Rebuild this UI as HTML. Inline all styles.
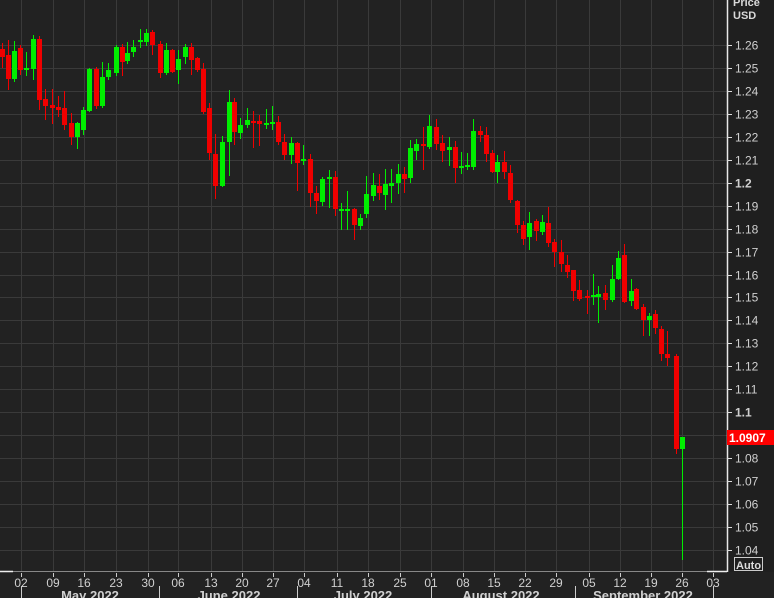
<!DOCTYPE html>
<html><head><meta charset="utf-8"><style>
html,body{margin:0;padding:0;background:#222;width:774px;height:598px;overflow:hidden}
svg{display:block}
text{font-family:"Liberation Sans","DejaVu Sans",sans-serif}
</style></head><body>
<svg id="s" width="774" height="598" xmlns="http://www.w3.org/2000/svg">
<rect width="774" height="598" fill="#222"/>
<g id="grid" stroke="#3a3a3a" stroke-width="1"></g>
<g id="c"></g>
<rect x="727" y="0" width="47" height="572" fill="#1f1f1f"/>
<line x1="727.5" y1="0" x2="727.5" y2="572" stroke="#e8e8e8" stroke-width="1.5"/>
<line x1="0" y1="571.5" x2="727" y2="571.5" stroke="#888" stroke-width="1"/>
<line x1="0" y1="571.5" x2="13" y2="571.5" stroke="#eee" stroke-width="1.5"/>
<line x1="707" y1="571.5" x2="727" y2="571.5" stroke="#eee" stroke-width="1.5"/>
<g id="ax" fill="#d0d0d0" font-size="12"></g>
<text x="733" y="6" fill="#d8d8d8" font-size="11" font-weight="bold">Price</text>
<text x="733" y="19" fill="#d8d8d8" font-size="11" font-weight="bold">USD</text>
<rect x="727" y="430" width="47" height="15" fill="#f00"/>
<text x="729" y="442" fill="#fff" font-size="12" font-weight="bold">1.0907</text>
<rect x="734.5" y="557.5" width="28" height="13" fill="#1f1f1f" stroke="#ccc"/>
<text x="736" y="569" fill="#ddd" font-size="11" font-weight="bold">Auto</text>
</svg>
<script>
var NS="http://www.w3.org/2000/svg";
function el(p,t,a,txt){var e=document.createElementNS(NS,t);for(var k in a)e.setAttribute(k,a[k]);if(txt)e.textContent=txt;p.appendChild(e);return e;}
var grid=document.getElementById('grid'),ax=document.getElementById('ax'),c=document.getElementById('c');
var dx=[21,53,84,116,148,178,211,242,273,304,337,368,400,431,463,494,525,556,589,620,651,682,713];
var dl=["02","09","16","23","30","06","13","20","27","04","11","18","25","01","08","15","22","29","05","12","19","26","03"];
dx.forEach(function(x,i){el(grid,'line',{x1:x+.5,y1:0,x2:x+.5,y2:571});
 el(ax,'line',{x1:x+.5,y1:573,x2:x+.5,y2:577,stroke:'#ccc'});
 el(ax,'text',{x:x,y:587,'text-anchor':'middle'},dl[i]);});
for(var k=0;k<=22;k++){var y=Math.round(45+k*22.95)+.5;var p=(1.26-k*0.01);
 el(grid,'line',{x1:0,y1:y,x2:727,y2:y});
 el(ax,'line',{x1:727,y1:y,x2:732,y2:y,stroke:'#ddd'});
 var s=p.toFixed(2),b=false;if(Math.abs(p-1.2)<1e-6){s="1.2";b=true}if(Math.abs(p-1.1)<1e-6){s="1.1";b=true}
 var t=el(ax,'text',{x:735,y:y+4},s);if(b)t.setAttribute('font-weight','bold');}
[21,159,297,431,575,713].forEach(function(x){el(ax,'line',{x1:x+.5,y1:586,x2:x+.5,y2:598,stroke:'#ccc'})});
[["May 2022",90],["June 2022",229],["July 2022",363],["August 2022",501],["September 2022",643]].forEach(function(m){
 el(ax,'text',{x:m[1],y:600,'text-anchor':'middle','font-weight':'bold','font-size':'13'},m[0]);});
var d=[
[2,'r',49,57,43,68],[8,'r',55,79,40,90],[14,'g',51,79,41,82],[20,'r',48,70,45,75],[26,'g',68,70,52,76],[33,'g',39,69,35,80],[39,'r',39,100,36,110],[45,'r',99,106,89,120],[52,'r',105,108,89,124],[58,'r',107,110,96,117],[64,'r',108,125,91,130],[71,'r',123,137,113,145],[77,'g',123,137,122,149],[83,'g',110,130,107,135],[89,'g',69,111,68,112],[96,'r',69,106,67,109],[102,'g',77,106,62,108],[108,'g',70,77,63,80],[116,'g',47,73,45,76],[122,'r',47,62,44,76],[127,'g',53,61,42,64],[133,'g',47,52,40,57],[140,'g',40,42,29,48],[146,'g',33,42,29,46],[152,'r',32,45,30,55],[160,'r',44,73,41,78],[166,'g',50,73,43,75],[172,'r',50,72,49,73],[178,'g',59,70,50,84],[185,'g',47,57,44,64],[191,'r',47,60,43,75],[197,'r',58,70,57,72],[203,'r',69,112,63,114],[209,'r',108,153,103,160],[215,'r',154,186,134,199],[222,'g',142,186,136,187],[229,'g',102,142,90,176],[234,'r',102,132,98,145],[240,'g',125,133,118,139],[247,'g',120,125,108,128],[253,'r',121,123,111,148],[259,'r',121,124,115,146],[266,'g',123,124,109,129],[272,'g',122,124,106,130],[278,'r',122,142,116,145],[284,'r',142,155,134,160],[291,'g',143,155,137,164],[297,'r',143,163,142,191],[303,'g',159,161,145,165],[310,'r',159,193,154,207],[316,'r',193,201,186,214],[322,'g',179,202,177,206],[329,'g',177,178,170,208],[335,'r',177,209,171,216],[341,'g',209,210,203,230],[347,'g',209,210,191,230],[354,'r',209,225,208,240],[360,'g',218,226,214,230],[366,'g',194,214,176,218],[373,'g',185,196,173,201],[379,'r',186,193,174,200],[385,'g',184,195,169,210],[391,'g',183,186,169,203],[398,'g',174,183,164,194],[404,'r',174,179,167,193],[410,'g',148,178,140,183],[416,'g',144,151,139,160],[423,'r',144,145,127,170],[429,'g',126,147,115,149],[436,'r',127,144,119,150],[442,'r',143,151,135,162],[449,'g',147,150,137,166],[455,'r',147,168,141,183],[461,'g',166,167,152,174],[467,'g',165,167,153,170],[473,'g',131,167,119,170],[480,'r',131,135,126,142],[486,'r',135,154,127,162],[492,'r',153,172,150,173],[497,'g',162,172,155,183],[504,'r',162,172,151,179],[510,'r',173,200,165,203],[517,'r',201,225,200,233],[523,'r',225,239,221,245],[529,'g',223,237,212,250],[536,'r',221,231,219,241],[542,'g',222,232,215,235],[548,'r',223,243,207,247],[554,'r',242,252,239,267],[561,'r',252,264,240,272],[567,'r',265,272,255,278],[573,'r',270,291,270,301],[579,'r',290,299,280,301],[587,'r',296,297,290,314],[593,'g',295,297,274,305],[598,'g',294,297,286,323],[605,'r',293,300,285,310],[612,'g',279,300,265,302],[618,'g',258,279,251,280],[624,'r',255,302,244,303],[631,'g',291,301,279,306],[636,'r',289,309,288,310],[643,'r',307,320,304,336],[649,'g',316,320,313,336],[655,'r',314,328,310,334],[661,'r',329,354,326,361],[667,'r',354,358,331,366],[676,'r',356,449,354,454],[682,'g',437,449,437,560]];
d.forEach(function(a){var col=a[1]=='r'?'#f00000':'#00ee00';
 el(c,'line',{x1:a[0]+.5,y1:a[4],x2:a[0]+.5,y2:a[5],stroke:col,'stroke-width':1});
 var h=Math.max(2,a[3]-a[2]);el(c,'rect',{x:a[0]-2,y:a[2],width:5,height:h,fill:col});});
</script>
</body></html>
